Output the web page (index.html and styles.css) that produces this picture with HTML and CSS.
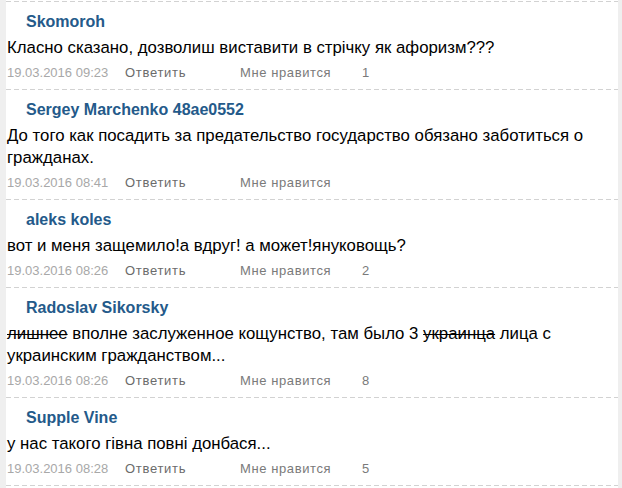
FILE: index.html
```html
<!DOCTYPE html>
<html>
<head>
<meta charset="utf-8">
<link rel="stylesheet" href="styles.css">
</head>
<body>
<div class="page">
  <div class="comment">
    <div class="name">Skomoroh</div>
    <div class="text">Класно сказано, дозволиш виставити в стрічку як афоризм???</div>
    <div class="meta"><span class="date">19.03.2016 09:23</span><span class="reply">Ответить</span><span class="like">Мне нравится</span><span class="count">1</span></div>
  </div>
  <div class="comment">
    <div class="name">Sergey Marchenko 48ae0552</div>
    <div class="text">До того как посадить за предательство государство обязано заботиться о гражданах.</div>
    <div class="meta"><span class="date">19.03.2016 08:41</span><span class="reply">Ответить</span><span class="like">Мне нравится</span><span class="count"></span></div>
  </div>
  <div class="comment">
    <div class="name">aleks koles</div>
    <div class="text">вот и меня защемило!а вдруг! а может!януковощь?</div>
    <div class="meta"><span class="date">19.03.2016 08:26</span><span class="reply">Ответить</span><span class="like">Мне нравится</span><span class="count">2</span></div>
  </div>
  <div class="comment">
    <div class="name">Radoslav Sikorsky</div>
    <div class="text"><s>лишнее</s> вполне заслуженное кощунство, там было 3 <s>украинца</s> лица с украинским гражданством...</div>
    <div class="meta"><span class="date">19.03.2016 08:26</span><span class="reply">Ответить</span><span class="like">Мне нравится</span><span class="count">8</span></div>
  </div>
  <div class="comment">
    <div class="name">Supple Vine</div>
    <div class="text">у нас такого гівна повні донбася...</div>
    <div class="meta"><span class="date">19.03.2016 08:28</span><span class="reply">Ответить</span><span class="like">Мне нравится</span><span class="count">5</span></div>
  </div>
  <div class="sep"></div>
</div>
</body>
</html>
```
FILE: styles.css
```css
html, body {
  margin: 0;
  padding: 0;
  background: #efefef;
}
.page {
  margin: 0 4px 0 6px;
  background: #fff;
  height: 488px;
  padding-top: 1px;
  box-sizing: border-box;
  font-family: "Liberation Sans", Arial, sans-serif;
}
.comment {
  background-image: repeating-linear-gradient(to right, #d2d2d2 0 5px, transparent 5px 8px);
  background-size: 100% 1px;
  background-repeat: no-repeat;
  background-position: 0 0;
  padding: 12px 0 7px 1px;
}
.sep {
  height: 1px;
  background-image: repeating-linear-gradient(to right, #d2d2d2 0 5px, transparent 5px 8px);
}
.name {
  font-size: 16px;
  line-height: 18px;
  font-weight: bold;
  color: #245a8a;
  padding-left: 19px;
}
.text {
  margin-top: 6px;
  font-size: 16.8px;
  line-height: 22px;
  color: #000;
}
.text s {
  text-decoration-thickness: 1px;
}
.meta {
  margin-top: 5px;
  font-size: 13px;
  line-height: 18px;
  display: flex;
}
.date {
  width: 118px;
  color: #a8a8a8;
}
.reply {
  width: 115px;
  color: #6b6b6b;
  letter-spacing: 0.7px;
}
.like {
  width: 122px;
  color: #7a7a7a;
  letter-spacing: 0.6px;
}
.count {
  color: #7a7a7a;
}
```
